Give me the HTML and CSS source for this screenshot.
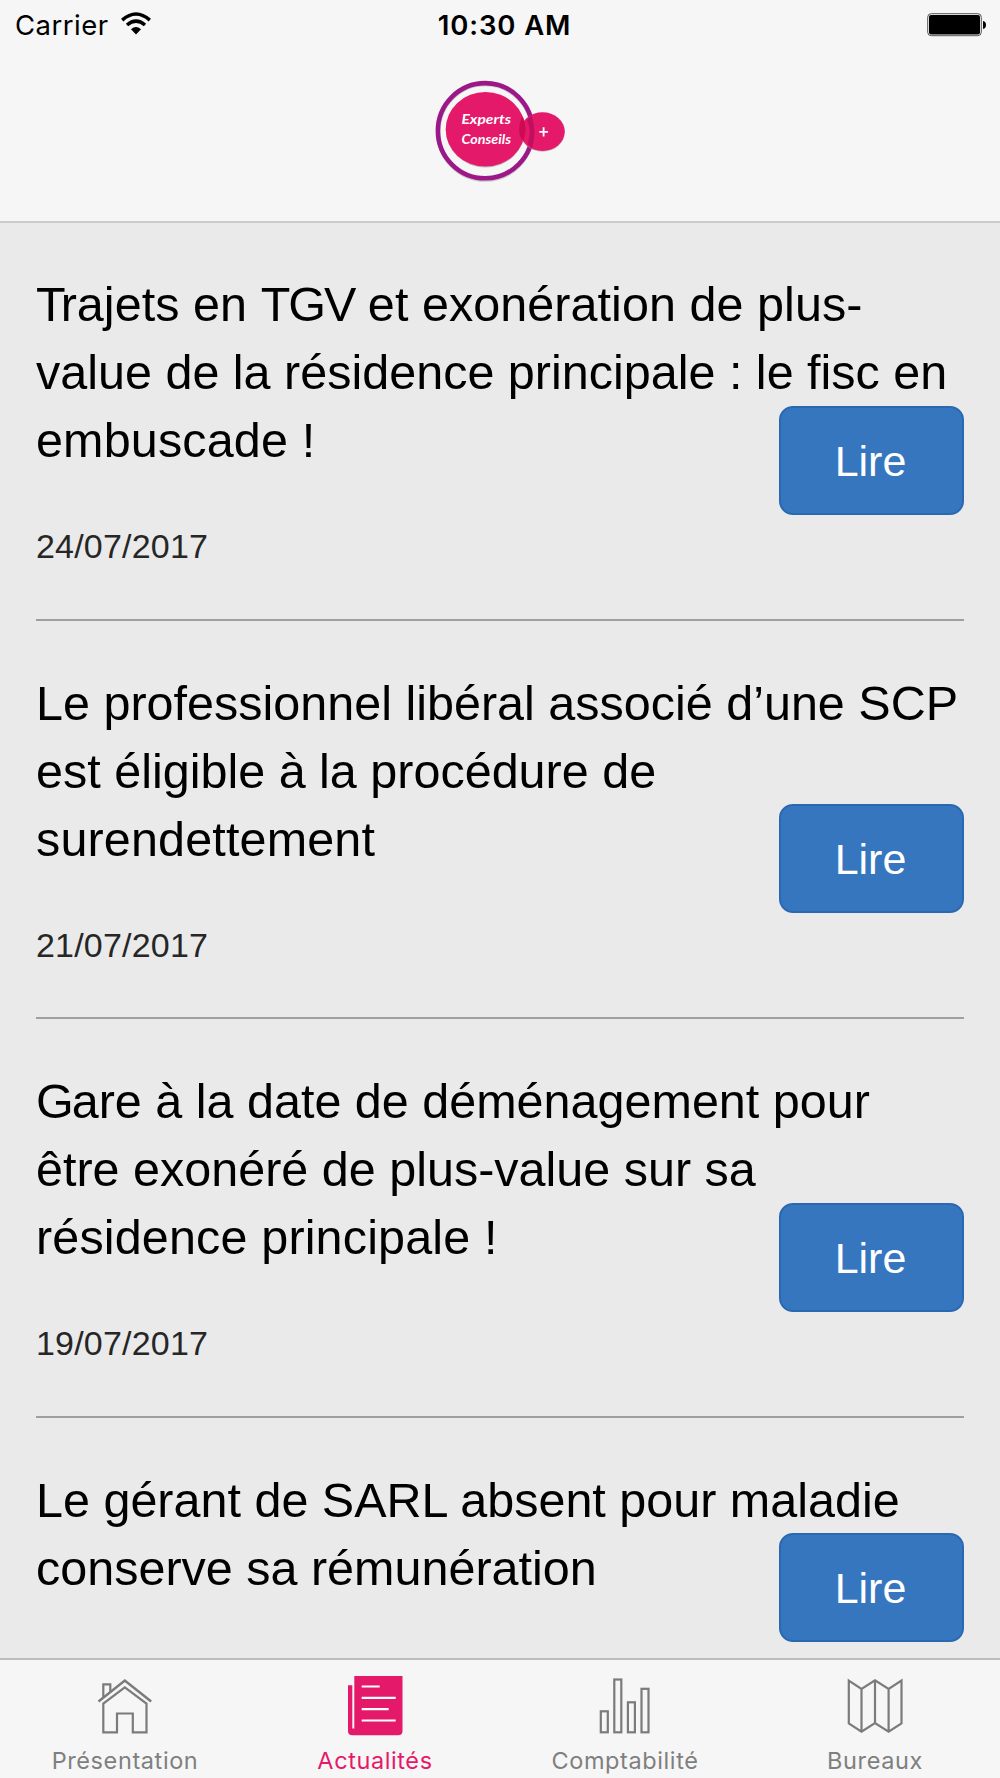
FILE: index.html
```html
<!DOCTYPE html>
<html lang="fr">
<head>
<meta charset="utf-8">
<title>Experts Conseils - Actualités</title>
<link rel="stylesheet" href="styles.css">
</head>
<body>
<div class="screen">
  <header class="header">
    <div class="status">
      <div class="status-left">
        <span class="carrier">Carrier</span>
        <svg class="wifi" width="32" height="24" viewBox="0 0 32 24">
          <g fill="none" stroke="#000" stroke-width="3.5">
            <path d="M2.2 8.1Q16-4 29.8 8.1"/>
            <path d="M7 13Q16 5.300 25 13"/>
          </g>
          <path d="M16 22.500 11 17.300Q16 12.500 21 17.300Z"/>
        </svg>
      </div>
      <span class="time">10:30 AM</span>
      <svg class="battery" width="60" height="24" viewBox="0 0 60 24">
        <rect x=".7" y=".7" width="53.600" height="22" rx="3.500" fill="#f6f6f6" stroke="#555" stroke-width="1"/>
        <rect x="2" y="2" width="51" height="19.600" rx="2"/>
        <path d="M56 8Q59 8.500 59 12T56 16Z"/>
      </svg>
    </div>
    <svg class="logo" width="160" height="140" viewBox="0 0 160 140">
      <ellipse cx="65.300" cy="71.800" rx="47" ry="47.800" fill="none" stroke="#999" stroke-width="4.500" opacity=".5"/>
      <ellipse cx="65.200" cy="70.700" rx="47.300" ry="47.600" fill="none" stroke="#9c1889" stroke-width="4.600"/>
      <ellipse cx="65.400" cy="70.200" rx="39.500" ry="37.300" fill="#999" opacity=".6"/>
      <ellipse cx="65.400" cy="69.300" rx="39.700" ry="37.300" fill="#e5196a"/>
      <ellipse cx="122.500" cy="72.500" rx="22" ry="19.300" fill="#999" opacity=".5"/>
      <ellipse cx="122.500" cy="71.600" rx="22.300" ry="19.300" fill="#e5196a"/>
      <path d="M102.800 56.200A39.700 37.300 0 0 1 103.400 81Q99.200 77 99.200 71Q99 62 102.800 56.200Z" fill="#cc0b52"/>
      <path d="M107 60Q112 70 107.800 84L112 88.500Q117 71 111.500 55.500Z" fill="#b50b5c" opacity=".75"/>
      <g class="logo-text">
        <text x="41.500" y="64" textLength="49.500" lengthAdjust="spacingAndGlyphs">Experts</text>
        <text x="41.500" y="84" textLength="49.500" lengthAdjust="spacingAndGlyphs">Conseils</text>
      </g>
      <path d="M119.300 71.800H128M123.600 67.200V76.500" stroke="#fff" stroke-width="1.800"/>
    </svg>
  </header>

  <main class="news">
    <article class="item first">
      <h2 class="title"><span class="tight"><span class="kern-t">T</span>rajets en <span class="caps">TGV</span> et exonération de plus-</span><br>value de la résidence principale : le fisc en<br><span class="spaced">embuscade !</span></h2>
      <div class="foot"><time class="date">24/07/2017</time><a class="btn">Lire</a></div>
    </article>
    <article class="item">
      <h2 class="title">Le professionnel libéral associé d’une SCP<br>est éligible à la procédure de<br><span class="spaced">surendettement</span></h2>
      <div class="foot"><time class="date">21/07/2017</time><a class="btn">Lire</a></div>
    </article>
    <article class="item">
      <h2 class="title"><span class="kern-g">G</span>are à la date de déménagement pour<br>être exonéré de plus-value sur sa<br><span class="spaced">résidence principale !</span></h2>
      <div class="foot"><time class="date">19/07/2017</time><a class="btn">Lire</a></div>
    </article>
    <article class="item last">
      <h2 class="title">Le gérant de SARL absent pour maladie<br>conserve sa rémunération</h2>
      <div class="foot"><a class="btn">Lire</a></div>
    </article>
  </main>

  <nav class="tabs">
    <a class="tab">
      <svg class="icon" width="60" height="64" viewBox="0 0 60 64">
        <g fill="none" stroke="#7b7b7b" stroke-width="2.200">
          <path d="M3.500 25.500 29.800 4.500 56.200 25.500" stroke-width="2.500"/>
          <path d="M8.300 21.500V8.300H15.300V15.800"/>
          <path d="M8.300 56.300V27.500L29.800 11.300 51.500 27.500V56.300H37.800V37.500H22V56.300Z"/>
        </g>
      </svg>
      <span class="label">Présentation</span>
    </a>
    <a class="tab active">
      <svg class="icon" width="60" height="64" viewBox="0 0 60 64">
        <path fill="#e5196a" d="M9.300 0H57.500V55Q57.500 59.300 53 59.300H7.500Q3 59.300 3 55V9.300H7.300V52.500H9.300Z"/>
        <path fill="none" stroke="#fff" stroke-width="2.200" d="M16.700 10.500H34.700M16.700 21.800H50.700M16.700 33.100H43.700M16.700 44.500H50.700"/>
      </svg>
      <span class="label">Actualités</span>
    </a>
    <a class="tab">
      <svg class="icon" width="60" height="64" viewBox="0 0 60 64">
        <g fill="none" stroke="#7b7b7b" stroke-width="2.200">
          <rect x="5.800" y="35.300" width="7" height="21"/>
          <rect x="19.300" y="3.500" width="7" height="52.800"/>
          <rect x="32.900" y="26.300" width="7" height="30"/>
          <rect x="46.500" y="12.800" width="7" height="43.500"/>
        </g>
      </svg>
      <span class="label">Comptabilité</span>
    </a>
    <a class="tab">
      <svg class="icon" width="60" height="64" viewBox="0 0 60 64">
        <path fill="none" stroke="#7b7b7b" stroke-width="2.200" d="M3.800 4.600 16.500 13 30 4.400 43.600 13 56.500 4.600V47.500L43.600 55.700 30 47 16.500 55.700 3.800 47.500ZM16.500 13V55.500M30 4.600V47M43.600 13V55.500"/>
      </svg>
      <span class="label">Bureaux</span>
    </a>
  </nav>
</div>
</body>
</html>
```
FILE: styles.css
```css
* { box-sizing: border-box; }
body {
  margin: 0;
  background: #eaeaea;
  font-family: "Liberation Sans", Arial, sans-serif;
}
.screen {
  width: 1000px;
  height: 1778px;
  overflow: hidden;
  display: flex;
  flex-direction: column;
}
.header {
  flex: none;
  height: 223px;
  background: #f6f6f6;
  border-bottom: 2px solid #cbcbcb;
  display: flex;
  flex-direction: column;
}
.status {
  height: 51px;
  display: grid;
  grid-template-columns: 1fr auto 1fr;
  align-items: center;
  padding: 0 13px 0 15px;
  font: 27.500px/51px Inter, sans-serif;
}
.status-left { display: flex; align-items: center; gap: 11px; }
.wifi { margin-top: -3px; }
.carrier { letter-spacing: .5px; }
.time { font-weight: 600; padding-left: 7px; letter-spacing: .9px; }
.battery { justify-self: end; margin-top: -1px; }
.logo { margin: 9px 0 0 420px; }
.logo-text {
  fill: #fff;
  font: italic 700 13px Lato, sans-serif;
}
.news {
  flex: 1;
  min-height: 0;
  overflow: hidden;
  padding: 0 36px;
}
.item {
  height: 398.500px;
  padding-top: 48px;
  border-bottom: 2px solid #9f9f9f;
}
.item.first { height: 397.500px; padding-top: 47px; }
.item.last { border-bottom: 0; }
.title {
  margin: 0;
  font-size: 48.500px;
  line-height: 68px;
  font-weight: 400;
  color: #000;
  white-space: nowrap;
}
.spaced { letter-spacing: .15px; }
.tight { letter-spacing: .05px; }
.kern-t { letter-spacing: -5px; }
.kern-g { letter-spacing: -2px; }
.caps { letter-spacing: -2px; }
.foot {
  display: flex;
  justify-content: flex-end;
  align-items: flex-start;
}
.date {
  margin: 50px auto 0 0;
  font-size: 34px;
  line-height: 44px;
  letter-spacing: .2px;
  color: #262626;
}
.btn {
  width: 185px;
  height: 109px;
  margin-top: -68.300px;
  padding-right: 2px;
  border: 2px solid #2a69b2;
  border-radius: 14px;
  background: #3676bf;
  color: #fff;
  font-size: 43px;
  line-height: 107px;
  text-align: center;
}
.tabs {
  flex: none;
  height: 120px;
  background: #f6f6f6;
  border-top: 2px solid #bdbdbd;
  display: grid;
  grid-template-columns: repeat(4, 1fr);
}
.tab {
  display: flex;
  flex-direction: column;
  align-items: center;
  padding-top: 16px;
  color: #7f7f7f;
}
.tab.active { color: #e5196a; }
.label {
  font: 23.500px/32px Inter, sans-serif;
  letter-spacing: .6px;
  margin-top: 5px;
}
```
